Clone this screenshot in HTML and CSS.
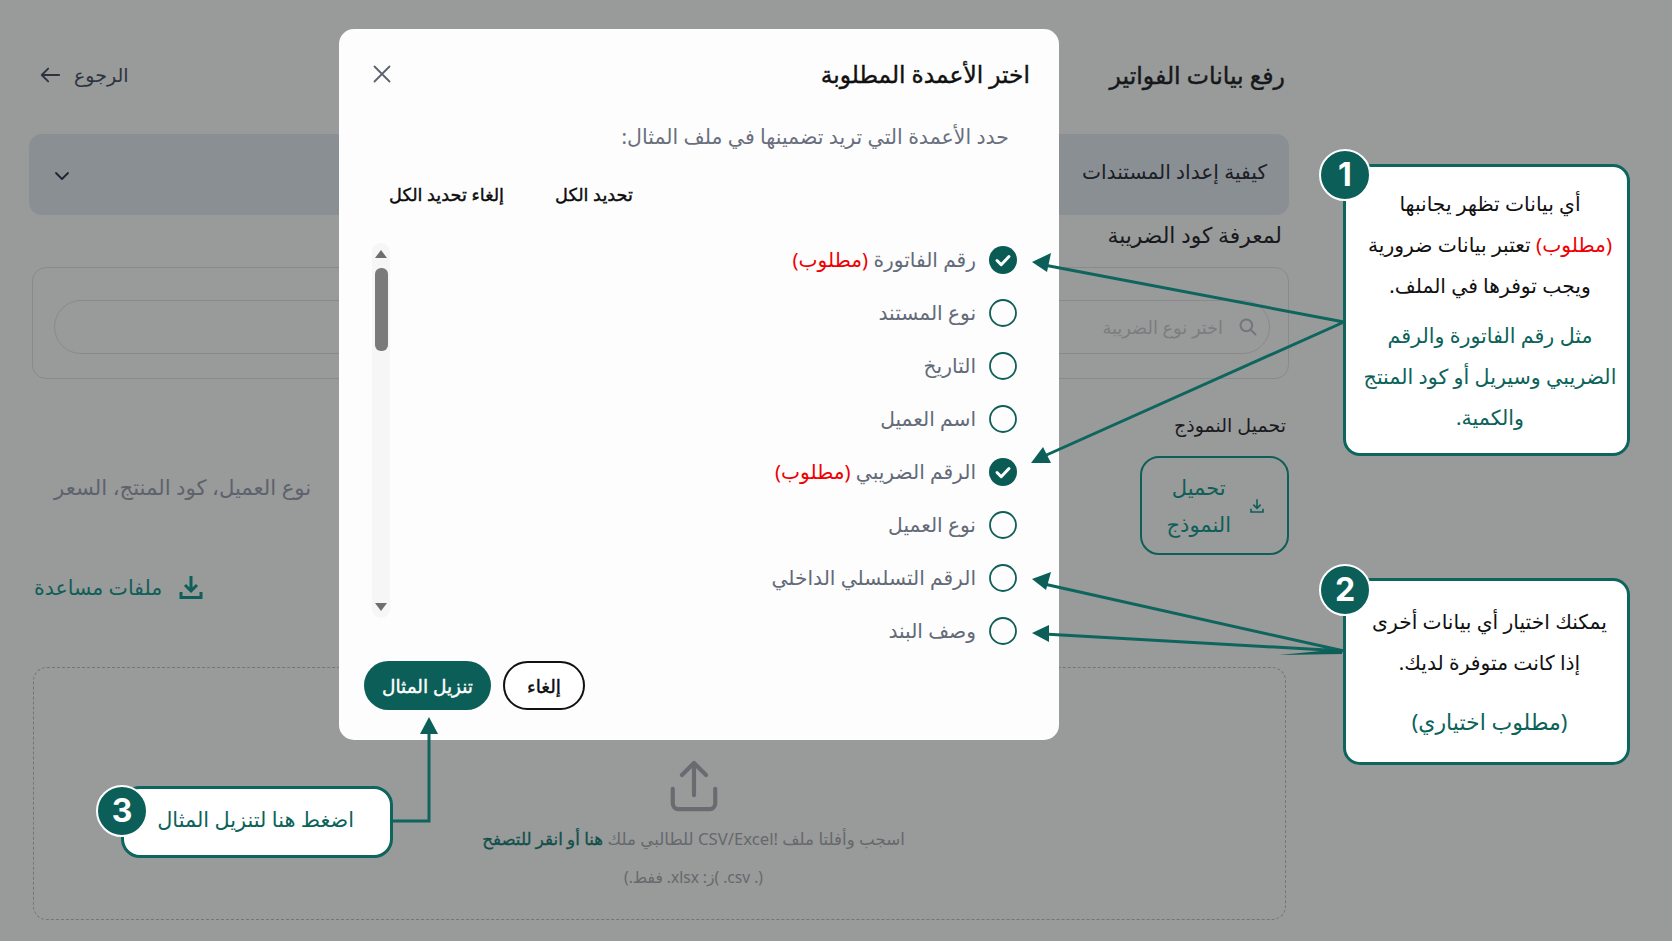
FILE: index.html
```html
<!DOCTYPE html>
<html lang="ar" dir="rtl">
<head>
<meta charset="utf-8">
<title>رفع بيانات الفواتير</title>
<link rel="stylesheet" href="styles.css">
</head>
<body>
<main class="page">
  <header class="page-head">
    <h1 class="page-title">رفع بيانات الفواتير</h1>
    <a class="back">
      <span>الرجوع</span>
      <svg class="back-icon" viewBox="0 0 24 24" fill="none" stroke="currentColor" stroke-width="2" stroke-linecap="round" stroke-linejoin="round"><path d="M22 12H3M10 5l-7 7 7 7"/></svg>
    </a>
  </header>

  <section class="accordion">
    <span>كيفية إعداد المستندات</span>
    <svg class="chevron" viewBox="0 0 24 24" fill="none" stroke="currentColor" stroke-width="2.4" stroke-linecap="round" stroke-linejoin="round"><path d="M4 8l8 8 8-8"/></svg>
  </section>

  <p class="tax-label">لمعرفة كود الضريبة</p>
  <section class="tax-card">
    <div class="search">
      <svg class="search-icon" viewBox="0 0 24 24" fill="none" stroke="currentColor" stroke-width="2.4" stroke-linecap="round"><circle cx="10" cy="10" r="7"/><path d="M15.5 15.5L21 21"/></svg>
      <span>اختر نوع الضريبة</span>
    </div>
  </section>

  <p class="template-label">تحميل النموذج</p>
  <section class="template-row">
    <button class="template-btn">
      <svg class="template-icon" viewBox="0 0 24 24" fill="none" stroke="currentColor" stroke-width="2.4"><path d="M12 2v13M6.5 10l5.5 5.5 5.5-5.5M3 16v5h18v-5"/></svg>
      <span>تحميل<br>النموذج</span>
    </button>
    <p class="columns-note">نوع العميل، كود المنتج، السعر</p>
  </section>

  <a class="help-files">
    <svg class="help-icon" viewBox="0 0 24 24" fill="none" stroke="currentColor" stroke-width="3"><path d="M12 1v14M6 10l6 6 6-6M2 17v5.500h20V17"/></svg>
    <span>ملفات مساعدة</span>
  </a>

  <section class="dropzone">
    <svg class="upload-icon" viewBox="0 0 52 56" fill="none" stroke="currentColor" stroke-width="4.500" stroke-linecap="round" stroke-linejoin="round"><path d="M26 38V4M13 16L26 3l13 13M3 31v16a6 6 0 0 0 6 6h34a6 6 0 0 0 6-6V31"/></svg>
    <p class="drop-text">اسجب وأفلتا ملف !CSV/Excel للطالبي ملك <b>هنا أو انقر للتصفح</b></p>
    <p class="drop-hint">(. csv. )ز: xlsx. ففط.)</p>
  </section>
</main>

<section class="modal">
  <div class="modal-head">
    <h2 class="modal-title">اختر الأعمدة المطلوبة</h2>
    <svg class="close" viewBox="0 0 24 24" fill="none" stroke="currentColor" stroke-width="2.200" stroke-linecap="round"><path d="M3 3l18 18M21 3L3 21"/></svg>
  </div>
  <p class="modal-sub">حدد الأعمدة التي تريد تضمينها في ملف المثال:</p>
  <div class="modal-actions">
    <button class="link-btn">تحديد الكل</button>
    <button class="link-btn">إلغاء تحديد الكل</button>
  </div>
  <div class="modal-body">
    <ul class="col-list">
      <li class="col-item"><svg class="radio" viewBox="0 0 28 28"><circle class="on" cx="14" cy="14" r="14"/><path class="tick" d="M8 14.500l4.200 4.200L20 10.500"/></svg><span>رقم الفاتورة <em>(مطلوب)</em></span></li>
      <li class="col-item"><svg class="radio" viewBox="0 0 28 28"><circle class="off" cx="14" cy="14" r="13"/></svg><span>نوع المستند</span></li>
      <li class="col-item"><svg class="radio" viewBox="0 0 28 28"><circle class="off" cx="14" cy="14" r="13"/></svg><span>التاريخ</span></li>
      <li class="col-item"><svg class="radio" viewBox="0 0 28 28"><circle class="off" cx="14" cy="14" r="13"/></svg><span>اسم العميل</span></li>
      <li class="col-item"><svg class="radio" viewBox="0 0 28 28"><circle class="on" cx="14" cy="14" r="14"/><path class="tick" d="M8 14.500l4.200 4.200L20 10.500"/></svg><span>الرقم الضريبي <em>(مطلوب)</em></span></li>
      <li class="col-item"><svg class="radio" viewBox="0 0 28 28"><circle class="off" cx="14" cy="14" r="13"/></svg><span>نوع العميل</span></li>
      <li class="col-item"><svg class="radio" viewBox="0 0 28 28"><circle class="off" cx="14" cy="14" r="13"/></svg><span>الرقم التسلسلي الداخلي</span></li>
      <li class="col-item"><svg class="radio" viewBox="0 0 28 28"><circle class="off" cx="14" cy="14" r="13"/></svg><span>وصف البند</span></li>
    </ul>
    <div class="scrollbar">
      <svg class="scroll-arrow" viewBox="0 0 12 8"><path d="M6 0l6 8H0z"/></svg>
      <div class="scroll-thumb"></div>
      <svg class="scroll-arrow down" viewBox="0 0 12 8"><path d="M6 8L0 0h12z"/></svg>
    </div>
  </div>
  <div class="modal-foot">
    <button class="btn-cancel">إلغاء</button>
    <button class="btn-primary">تنزيل المثال</button>
  </div>
</section>

<svg class="arrows" viewBox="0 0 1672 941">
  <g class="arrow-lines">
    <path d="M1344 322L1044 265M1344 322L1042 457"/>
    <path d="M1344 651L1044 584M1344 651L1044 634"/>
    <path d="M391 821H429V732"/>
  </g>
  <g class="arrow-heads">
    <path d="M1032 262L1051 253L1047 272Z"/>
    <path d="M1031 463L1043 447L1051 463Z"/>
    <path d="M1032 579L1051 572L1046 590Z"/>
    <path d="M1032 633L1049 625L1049 642Z"/>
    <path d="M429 717L438 734H420Z"/>
    <path d="M1342 649L1279 655L1342 654Z"/>
  </g>
</svg>

<aside class="callout callout-one">
  <span class="badge">1</span>
  <p>أي بيانات تظهر يجانبها<br><em>(مطلوب)</em> تعتبر بيانات ضرورية<br>ويجب توفرها في الملف.</p>
  <p class="teal gap-one">مثل رقم الفاتورة والرقم<br>الضريبي وسيريل أو كود المنتج<br>والكمية.</p>
</aside>
<aside class="callout callout-two">
  <span class="badge">2</span>
  <p>يمكنك اختيار أي بيانات أخرى<br>إذا كانت متوفرة لديك.</p>
  <p class="teal gap-two">(مطلوب اختياري)</p>
</aside>
<aside class="callout callout-three">
  <span class="badge">3</span>
  <p class="teal">اضغط هنا لتنزيل المثال</p>
</aside>
</body>
</html>
```
FILE: styles.css
```css
* { box-sizing: border-box; }
html, body { margin: 0; padding: 0; }
body {
  position: relative;
  width: 1672px;
  height: 941px;
  overflow: hidden;
  background: #999a9a;
  font-family: "Noto Sans", "DejaVu Sans", sans-serif;
  color: #1f2328;
}
p, h1, h2, ul { margin: 0; padding: 0; }
button { font: inherit; background: none; border: 0; padding: 0; color: inherit; }
em { font-style: normal; color: #f00000; }

/* page behind the dialog */
.page { display: flex; flex-direction: column; padding: 50px 383px 0 39px; }
.page-head { display: flex; justify-content: space-between; align-items: center; height: 50px; margin-right: 4px; }
.page-title { font-size: 23.600px; font-weight: 400; -webkit-text-stroke: 0.4px #15181b; color: #15181b; }
.back { display: flex; align-items: center; gap: 13px; font-size: 19px; color: #2c3440; }
.back-icon { width: 22px; height: 22px; }
.accordion {
  display: flex; justify-content: space-between; align-items: center;
  height: 81px; margin: 34px 0 0 -10px; padding: 0 22px 8px 24px;
  background: #8a8f94; border-radius: 13px; font-size: 20.200px; color: #1c2026;
}
.chevron { width: 18px; height: 18px; color: #1c2633; margin-top: 10px; }
.tax-label { margin-top: 5px; margin-right: 7px; font-size: 21.800px; line-height: 30px; color: #17191c; }
.tax-card {
  height: 112px; margin: 17px 0 0 -7px; padding: 32px 18px 0 21px;
  border: 1px solid #8a8a8a; border-radius: 14px;
}
.search {
  display: flex; align-items: center; gap: 15px; height: 54px; padding: 0 11px 0 18px;
  border: 1px solid #8a8a8a; border-radius: 27px; font-size: 17.800px; color: #7b7d80;
}
.search-icon { width: 20px; height: 20px; color: #73767a; }
.template-label { margin-top: 32px; margin-right: 3px; font-size: 19px; line-height: 28px; color: #191b1e; }
.template-row { display: flex; justify-content: space-between; align-items: flex-start; margin: 17px 0 0 -10px; height: 99px; }
.template-btn {
  display: flex; align-items: center; gap: 18px; width: 149px; height: 99px; padding: 0 22px;
  border: 2px solid #0f5f58; border-radius: 19px; font-size: 21px; line-height: 37px; color: #0e5f58;
}
.template-icon { width: 16px; height: 16px; flex: none; }
.columns-note { margin: 16px 0 0 25px; font-size: 21.200px; line-height: 30px; color: #5d626c; }
.help-files { display: flex; align-items: center; gap: 17px; align-self: flex-end; margin: 17px 0 0 -5px; height: 30px; font-size: 20.500px; color: #0e5f58; }
.help-icon { width: 24px; height: 24px; }
.dropzone {
  display: flex; flex-direction: column; align-items: center;
  height: 253px; margin: 65px 3px 0 -6px; padding: 92px 0 0 68px;
  border: 1px dashed #757575; border-radius: 14px; color: #66686c;
}
.upload-icon { width: 48px; height: 52px; color: #696b70; }
.drop-text { margin-top: 15px; font-size: 16.700px; line-height: 24px; }
.drop-text b { font-weight: 400; -webkit-text-stroke: 0.3px #0e4f4a; color: #0e4f4a; }
.drop-hint { margin-top: 14px; font-size: 15.500px; line-height: 24px; }

/* dialog */
.modal {
  position: absolute; left: 339px; top: 29px; width: 720px; height: 711px;
  display: flex; flex-direction: column;
  background: #fdfdfd; border-radius: 15px;
}
.modal-head { display: flex; justify-content: space-between; align-items: center; height: 40px; margin-top: 25px; padding: 0 29px 0 33px; }
.modal-title { font-size: 23.300px; font-weight: 400; -webkit-text-stroke: 0.4px #111; color: #111; }
.close { width: 20px; height: 20px; color: #5d6270; }
.modal-sub { margin: 28px 50px 0 0; font-size: 20.500px; line-height: 28px; color: #6a6f7d; }
.modal-actions { display: flex; gap: 51px; justify-content: flex-end; margin-top: 32px; padding-left: 50px; height: 24px; line-height: 24px; }
.link-btn { font-size: 17.700px; -webkit-text-stroke: 0.4px #0c0c0c; color: #0c0c0c; }
.modal-body { display: flex; justify-content: space-between; align-items: flex-start; height: 375px; margin-top: 37px; padding: 0 42px 0 33px; }
.col-list { list-style: none; margin-top: -10px; }
.col-item { display: flex; align-items: center; gap: 13px; height: 53px; font-size: 20.200px; color: #636a78; }
.col-item span { margin-bottom: 2px; }
.radio { width: 28px; height: 28px; flex: none; }
.radio .on { fill: #0b5b55; }
.radio .off { fill: none; stroke: #0f5f58; stroke-width: 1.800; }
.radio .tick { fill: none; stroke: #fff; stroke-width: 3; stroke-linecap: round; stroke-linejoin: round; }
.scrollbar {
  display: flex; flex-direction: column; align-items: center;
  width: 18px; height: 375px; padding: 7px 0; background: #f6f6f6; border-radius: 9px;
}
.scroll-arrow { width: 12px; height: 8px; fill: #6e6e6e; }
.scroll-arrow.down { margin-top: auto; }
.scroll-thumb { width: 13px; height: 83px; margin-top: 10px; border-radius: 6px; background: #7a7a7a; }
.modal-foot { display: flex; justify-content: flex-end; gap: 12px; margin-top: 43px; padding-left: 25px; }
.btn-cancel { width: 82px; height: 49px; border: 2px solid #111; border-radius: 25px; background: #fff; font-size: 18.500px; -webkit-text-stroke: 0.4px #0c0c0c; color: #0c0c0c; }
.btn-primary { width: 127px; height: 49px; border-radius: 25px; background: #0b5f58; font-size: 18.500px; -webkit-text-stroke: 0.4px #fff; color: #fff; }

/* annotations laid over the screenshot */
.arrows { position: absolute; left: 0; top: 0; width: 1672px; height: 941px; pointer-events: none; }
.arrow-lines path { fill: none; stroke: #0d655d; stroke-width: 3; }
.arrow-heads path { fill: #0b5f58; }
.callout {
  position: absolute; background: #fff; border: 3px solid #0d655d; border-radius: 17px;
  text-align: center; font-size: 20.300px; line-height: 41px; color: #111;
}
.callout .teal { color: #0b6259; }
.callout-one { left: 1343px; top: 164px; width: 287px; height: 292px; padding: 16px 0 0 7px; }
.callout-one .teal { font-size: 20.600px; }
.gap-one { margin-top: 9px; }
.callout-two { left: 1343px; top: 578px; width: 287px; height: 187px; padding: 20px 0 0 6px; }
.callout-two .teal { font-size: 22px; }
.gap-two { margin-top: 18px; }
.callout-three { left: 121px; top: 786px; width: 272px; height: 72px; padding: 10px 36px 0 0; border-radius: 19px; text-align: right; }
.callout-three .teal { font-size: 20.800px; }
.badge {
  position: absolute; width: 52px; height: 52px; display: flex; align-items: center; justify-content: center;
  background: #0b5f58; border: 2px solid #fff; border-radius: 50%;
  font-family: "Inter", "Liberation Sans", sans-serif; font-size: 32px; font-weight: 700; color: #fff; line-height: 1;
}
.callout-one .badge { left: -27px; top: -18px; }
.callout-two .badge { left: -27px; top: -17px; }
.callout-three .badge { left: -28px; top: -4px; }
```
